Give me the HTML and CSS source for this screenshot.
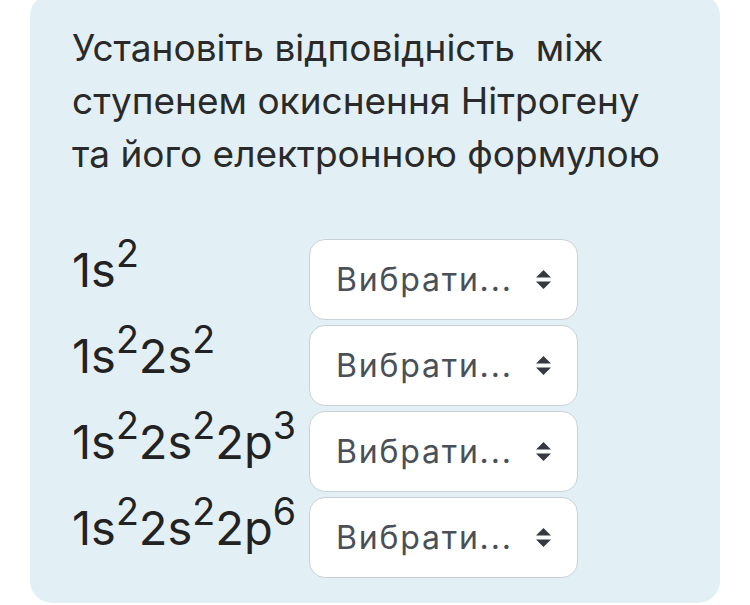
FILE: index.html
```html
<!DOCTYPE html>
<html lang="uk">
<head>
    <meta charset="UTF-8">
    <meta name="viewport" content="width=device-width, initial-scale=1.0">
    <title>Відповідність</title>
    <link rel="stylesheet" href="styles.css">
</head>
<body>
    <div class="formulation">
        <p class="qtext">Установіть відповідність&nbsp; між ступенем окиснення Нітрогену та його електронною формулою</p>
        <div class="answer">
            <div class="formula">1s<sup>2</sup></div>
            <div class="custom-select">
                <span>Вибрати...</span>
                <svg class="arrows" width="15" height="19" viewBox="0 0 4 5" preserveAspectRatio="none"><path d="M2 0L0 2h4zm0 5L0 3h4z"/></svg>
            </div>

            <div class="formula">1s<sup>2</sup>2s<sup>2</sup></div>
            <div class="custom-select">
                <span>Вибрати...</span>
                <svg class="arrows" width="15" height="19" viewBox="0 0 4 5" preserveAspectRatio="none"><path d="M2 0L0 2h4zm0 5L0 3h4z"/></svg>
            </div>

            <div class="formula">1s<sup>2</sup>2s<sup>2</sup>2p<sup>3</sup></div>
            <div class="custom-select">
                <span>Вибрати...</span>
                <svg class="arrows" width="15" height="19" viewBox="0 0 4 5" preserveAspectRatio="none"><path d="M2 0L0 2h4zm0 5L0 3h4z"/></svg>
            </div>

            <div class="formula">1s<sup>2</sup>2s<sup>2</sup>2p<sup>6</sup></div>
            <div class="custom-select">
                <span>Вибрати...</span>
                <svg class="arrows" width="15" height="19" viewBox="0 0 4 5" preserveAspectRatio="none"><path d="M2 0L0 2h4zm0 5L0 3h4z"/></svg>
            </div>
        </div>
    </div>
</body>
</html>
```

FILE: styles.css
```css
body {
    margin: 0;
    padding: 0;
    background-color: #fff;
    color: #222;
    font-family: Inter, "Noto Sans", sans-serif;
}
.formulation {
    margin: -6px 30px 0 30px;
    padding: 27px 40px 25px 42px;
    background-color: #e2f0f5;
    border-radius: 22px;
}
.qtext {
    margin: 0;
    font-size: 37px;
    line-height: 53px;
    color: #2a2a2a;
}
.answer {
    margin-top: 59px;
    display: grid;
    grid-template-columns: 237px 269px;
    grid-auto-rows: 81px;
    row-gap: 5px;
}
.formula {
    padding-top: 7px;
    font-size: 47px;
    line-height: 1;
    color: #222;
    white-space: nowrap;
}
sup {
    position: relative;
    top: -0.52em;
    vertical-align: baseline;
    font-size: 80%;
    line-height: 0;
}
.custom-select {
    box-sizing: border-box;
    display: flex;
    align-items: center;
    justify-content: space-between;
    padding: 0 26px 0 26px;
    background-color: #fff;
    border: 1px solid #c9d1d7;
    border-radius: 16px;
    font-size: 32px;
    letter-spacing: 1.8px;
    color: #495057;
}
.arrows {
    fill: #343a40;
}
```
